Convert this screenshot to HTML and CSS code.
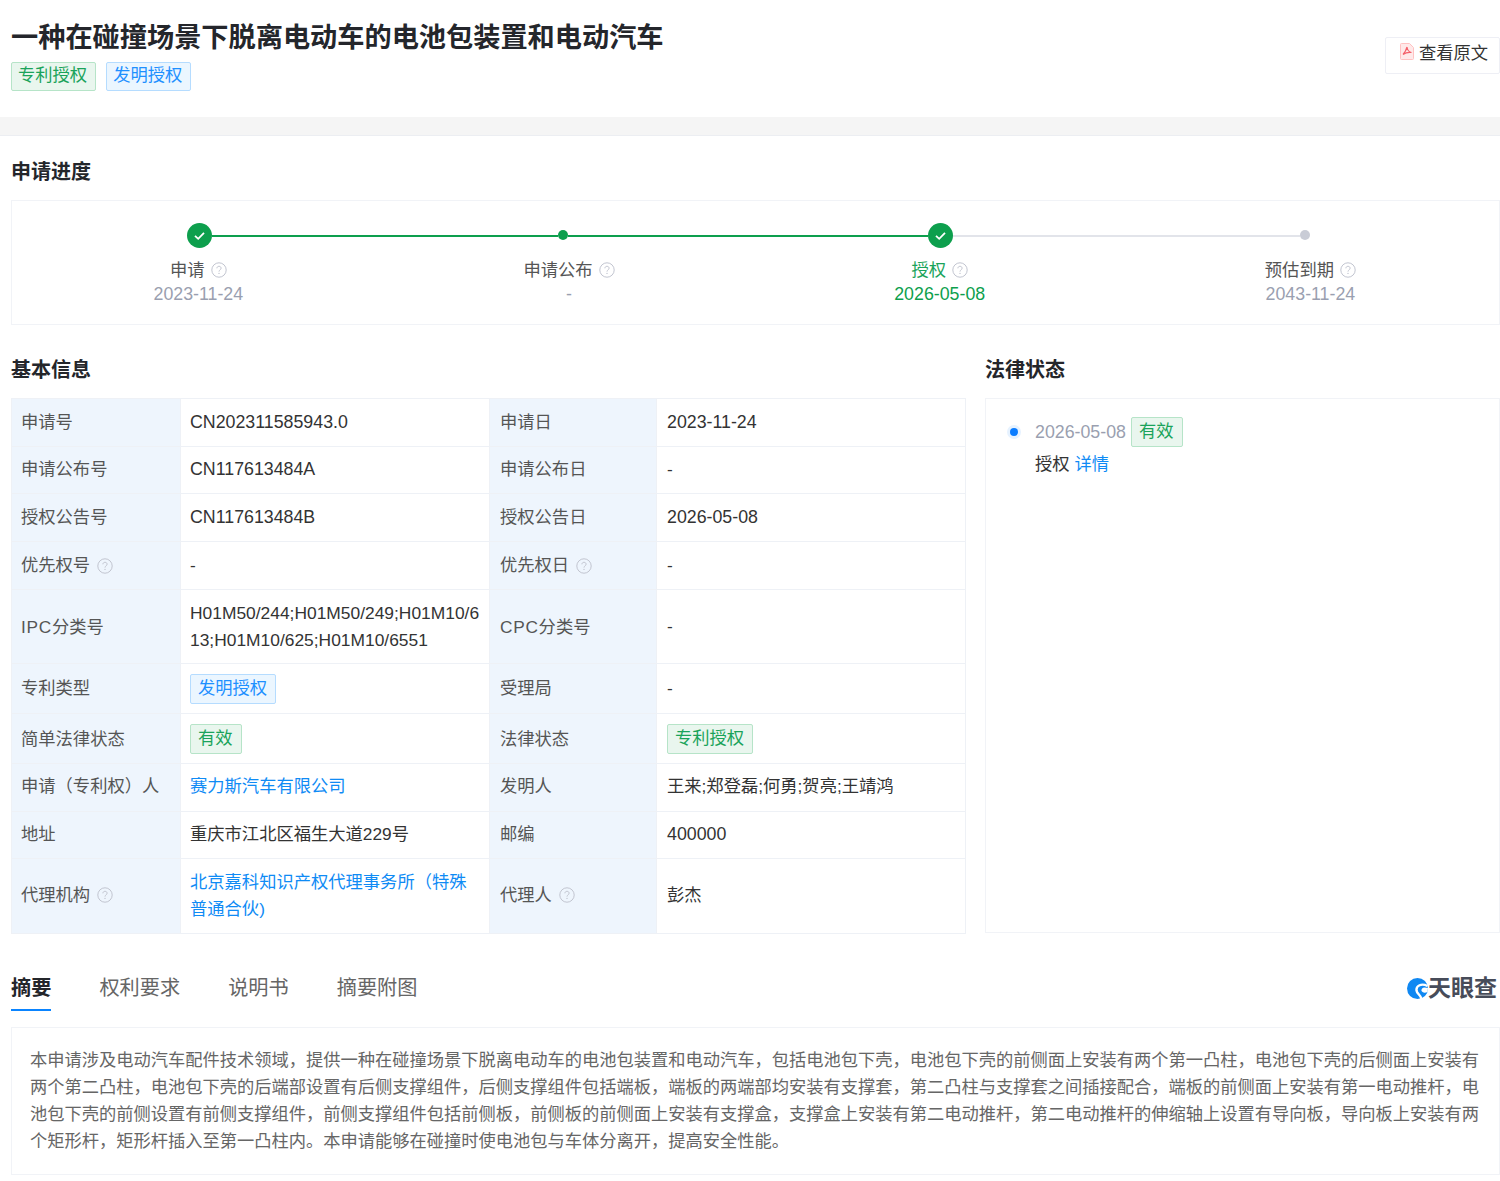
FILE: index.html
```html
<!DOCTYPE html>
<html lang="zh-CN">
<head>
<meta charset="utf-8">
<title>专利详情</title>
<link rel="stylesheet" href="styles.css">
</head>
<body>
<svg class="defs" width="0" height="0" aria-hidden="true">
  <symbol id="q" viewBox="0 0 16 16">
    <circle cx="8" cy="8" r="7.2" fill="none" stroke="#c2c5d0" stroke-width="1"/>
    <path d="M5.900 6.300c0-1.200.9-2 2.100-2s2.100.8 2.100 1.900c0 1.600-2.100 1.700-2.100 3.400" fill="none" stroke="#c2c5d0" stroke-width="1"/>
    <circle cx="8" cy="11.400" r=".7" fill="#c2c5d0"/>
  </symbol>
  <symbol id="check" viewBox="0 0 25 25">
    <circle cx="12.500" cy="12.500" r="12.500" fill="#0d9f4d"/>
    <path d="M8 12.800l3.200 3 5.800-6" fill="none" stroke="#fff" stroke-width="1.800"/>
  </symbol>
</svg>

<header class="top">
  <div>
    <h1 class="title">一种在碰撞场景下脱离电动车的电池包装置和电动汽车</h1>
    <div class="tags">
      <span class="tag green">专利授权</span>
      <span class="tag blue">发明授权</span>
    </div>
  </div>
  <button class="origin" type="button">
    <svg class="pdf" viewBox="0 0 14 17" width="14" height="17">
      <path d="M1.500.5h8l4 4v11a1 1 0 0 1-1 1h-11a1 1 0 0 1-1-1v-14a1 1 0 0 1 1-1z" fill="#ffe9e9" stroke="#ffc2c2"/>
      <path d="M7 4c-.6 2.500-1.800 5-4 7.500M7 4c.4 3 2 5 4.500 5.500M3 11.500c2.500-1.800 5-2.400 8.500-2" fill="none" stroke="#f4606a" stroke-width="1.200"/>
    </svg>
    查看原文
  </button>
</header>
<div class="band"></div>

<main class="page">
  <h2 class="heading h-progress">申请进度</h2>
  <section class="progress">
    <div class="track">
      <svg class="big" width="25" height="25"><use href="#check"/></svg>
      <span class="line green-line l1"></span>
      <span class="dot dot-green"></span>
      <span class="line green-line l2"></span>
      <svg class="big" width="25" height="25"><use href="#check"/></svg>
      <span class="line gray-line l3"></span>
      <span class="dot dot-gray"></span>
    </div>
    <div class="steps">
      <div class="step"><div class="step-name">申请<svg class="q"><use href="#q"/></svg></div><div class="step-date">2023-11-24</div></div>
      <div class="step"><div class="step-name">申请公布<svg class="q"><use href="#q"/></svg></div><div class="step-date">-</div></div>
      <div class="step on"><div class="step-name">授权<svg class="q"><use href="#q"/></svg></div><div class="step-date">2026-05-08</div></div>
      <div class="step"><div class="step-name">预估到期<svg class="q"><use href="#q"/></svg></div><div class="step-date">2043-11-24</div></div>
    </div>
  </section>

  <div class="columns">
    <section class="basic">
      <h2 class="heading">基本信息</h2>
      <div class="info">
        <div class="k">申请号</div><div class="v num">CN202311585943.0</div><div class="k">申请日</div><div class="v num">2023-11-24</div>
        <div class="k">申请公布号</div><div class="v num">CN117613484A</div><div class="k">申请公布日</div><div class="v">-</div>
        <div class="k">授权公告号</div><div class="v num">CN117613484B</div><div class="k">授权公告日</div><div class="v num">2026-05-08</div>
        <div class="k">优先权号<svg class="q"><use href="#q"/></svg></div><div class="v">-</div><div class="k">优先权日<svg class="q"><use href="#q"/></svg></div><div class="v">-</div>
        <div class="k"><span class="lat">IPC</span>分类号</div><div class="v wrap">H01M50/244;H01M50/249;H01M10/613;H01M10/625;H01M10/6551</div><div class="k"><span class="lat">CPC</span>分类号</div><div class="v">-</div>
        <div class="k">专利类型</div><div class="v"><span class="tag blue">发明授权</span></div><div class="k">受理局</div><div class="v">-</div>
        <div class="k">简单法律状态</div><div class="v"><span class="tag green">有效</span></div><div class="k">法律状态</div><div class="v"><span class="tag green">专利授权</span></div>
        <div class="k">申请（专利权）人</div><div class="v"><a class="link">赛力斯汽车有限公司</a></div><div class="k">发明人</div><div class="v">王来;郑登磊;何勇;贺亮;王靖鸿</div>
        <div class="k">地址</div><div class="v">重庆市江北区福生大道229号</div><div class="k">邮编</div><div class="v num">400000</div>
        <div class="k">代理机构<svg class="q"><use href="#q"/></svg></div><div class="v agency"><a class="link">北京嘉科知识产权代理事务所（特殊普通合伙)</a></div><div class="k">代理人<svg class="q"><use href="#q"/></svg></div><div class="v">彭杰</div>
      </div>
    </section>
    <section class="legal">
      <h2 class="heading">法律状态</h2>
      <div class="legal-box">
        <div class="legal-row">
          <span class="bullet"></span>
          <span class="legal-date">2026-05-08</span>
          <span class="tag green">有效</span>
        </div>
        <div class="legal-desc">授权 <a class="link">详情</a></div>
      </div>
    </section>
  </div>

  <div class="tabs">
    <a class="tab active">摘要</a>
    <a class="tab">权利要求</a>
    <a class="tab">说明书</a>
    <a class="tab">摘要附图</a>
    <div class="logo">
      <svg width="21" height="21" viewBox="0 0 21 21">
        <circle cx="10.500" cy="10.500" r="10.500" fill="#1088f2"/>
        <path d="M20.500 8C14.500 5 9 7.500 9.500 12.500 10 16 13.500 16.500 14.500 21" fill="none" stroke="#fff" stroke-width="2.400"/>
        <path d="M20.500 14c-3 1.500-5.500.5-6-1.500-.3-1.500 1-3 3-3l3.500.5z" fill="#fff"/>
      </svg>
      <span class="logo-text">天眼查</span>
    </div>
  </div>
  <section class="abstract">本申请涉及电动汽车配件技术领域，提供一种在碰撞场景下脱离电动车的电池包装置和电动汽车，包括电池包下壳，电池包下壳的前侧面上安装有两个第一凸柱，电池包下壳的后侧面上安装有两个第二凸柱，电池包下壳的后端部设置有后侧支撑组件，后侧支撑组件包括端板，端板的两端部均安装有支撑套，第二凸柱与支撑套之间插接配合，端板的前侧面上安装有第一电动推杆，电池包下壳的前侧设置有前侧支撑组件，前侧支撑组件包括前侧板，前侧板的前侧面上安装有支撑盒，支撑盒上安装有第二电动推杆，第二电动推杆的伸缩轴上设置有导向板，导向板上安装有两个矩形杆，矩形杆插入至第一凸柱内。本申请能够在碰撞时使电池包与车体分离开，提高安全性能。</section>
</main>
</body>
</html>
```
FILE: styles.css
```css
* { box-sizing: border-box; }
html, body { margin: 0; padding: 0; }
body {
  width: 1500px;
  background: #fff;
  color: #333;
  font-family: "Liberation Sans", "Noto Sans CJK SC", sans-serif;
  font-size: 17.3px;
}
.defs { position: absolute; }
h1, h2 { margin: 0; }

.top {
  display: flex;
  justify-content: space-between;
  height: 117px;
  padding: 22px 0 0 11px;
}
.title {
  font-size: 27.2px;
  line-height: 32px;
  font-weight: 700;
  color: #24262b;
}
.tags { display: flex; gap: 10px; margin-top: 8px; }
.tag {
  display: inline-block;
  height: 30px;
  padding: 0 8px 0 7px;
  border: 1px solid;
  border-radius: 2px;
  line-height: 26px;
  font-size: 17.3px;
}
.tags .tag { height: 29px; line-height: 25px; padding: 0 8px 0 6px; }
.green { background: #e9f6ee; border-color: #b6e4c8; color: #1aa35a; }
.blue { background: #ebf6ff; border-color: #b5dcff; color: #1e90ff; }
.origin {
  display: flex;
  align-items: center;
  gap: 5px;
  width: 115px;
  height: 37px;
  margin-top: 15px;
  padding: 0 0 8px 14px;
  background: #fff;
  border: 1px solid #eeeff5;
  border-radius: 2px;
  font: inherit;
  color: #333;
}
.band {
  height: 19px;
  background: #f5f5f5;
  border-bottom: 1px solid #eceef2;
}

.page { padding-left: 11px; }
.heading {
  font-size: 20px;
  line-height: 28px;
  font-weight: 700;
  color: #24262b;
}
.h-progress { padding-top: 22px; height: 64px; }

.progress {
  height: 125px;
  border: 1px solid #f1f3f7;
  padding-top: 22px;
}
.track {
  display: flex;
  align-items: center;
  height: 25px;
  padding-left: 175px;
}
.big { flex: none; }
.line { flex: none; height: 2px; }
.green-line { background: #0d9f4d; }
.gray-line { background: #e2e4ea; }
.l1 { width: 346px; }
.l2 { width: 360px; }
.l3 { width: 347px; }
.dot { flex: none; width: 10px; height: 10px; border-radius: 50%; margin-top: -2px; }
.dot-green { background: #0d9f4d; }
.dot-gray { background: #c9ccd6; }
.steps {
  display: grid;
  grid-template-columns: repeat(4, 370.7px);
  margin-top: 11px;
  padding-left: 1px;
}
.step { text-align: center; }
.step-name { line-height: 23px; color: #555; }
.step-date { line-height: 24px; font-size: 17.8px; color: #9a9fb0; }
.on .step-name { color: #1aa35a; }
.on .step-date { color: #0d9f4d; }
.q { width: 16px; height: 16px; margin-left: 7px; vertical-align: -2px; }
.step .q { margin-left: 6px; }

.columns {
  display: flex;
  gap: 19px;
  margin-top: 30px;
}
.basic { width: 955px; flex: none; }
.legal { flex: 1; }
.columns .heading { height: 43px; line-height: 30px; }
.info {
  display: grid;
  grid-template-columns: 169px 309px 167px 309px;
  grid-template-rows: 48px 47px 48px 48px 74px 50px 50px 48px 47px 75px;
  border: 1px solid #eef1f6;
  border-bottom-width: 0;
  border-right-width: 0;
}
.k, .v {
  display: flex;
  align-items: center;
  padding-left: 9px;
  border-bottom: 1px solid #eef1f6;
  border-right: 1px solid #eef1f6;
  line-height: 27px;
}
.k:nth-child(4n+3), .v:nth-child(4n+4) { padding-left: 10px; }
.info > :nth-child(n+5):nth-child(-n+8),
.info > :nth-child(n+29) { padding-bottom: 2px; }
.info > .agency { padding-bottom: 0; }
.k:nth-child(n+25):nth-child(-n+28) { padding-top: 2px; }
.k:nth-child(n+17):nth-child(-n+20) { padding-top: 1px; }
.k { background: #eef5fd; color: #555; }
.v { color: #333; }
.num { font-size: 17.8px; }
.lat { letter-spacing: .7px; }
.wrap { font-size: 17.4px; word-break: break-all; padding-right: 4px; }
.agency { padding-right: 16px; }
.link { color: #0f8bf5; }

.legal-box {
  height: 535px;
  border: 1px solid #f1f3f7;
  padding: 18px 0 0 24px;
}
.legal-row { display: flex; align-items: center; }
.bullet {
  flex: none;
  width: 8px;
  height: 8px;
  border-radius: 50%;
  background: #0a7cff;
  box-shadow: 0 0 0 3px #e6f2ff;
  margin-right: 17px;
}
.legal-date { color: #9a9fb0; margin-right: 5px; font-size: 17.8px; }
.legal-desc { margin: 3px 0 0 25px; line-height: 28px; color: #333; }

.tabs {
  display: flex;
  gap: 48px;
  align-items: flex-start;
  height: 93px;
  padding-top: 40px;
}
.tab {
  font-size: 20.2px;
  line-height: 28px;
  height: 37px;
  color: #666;
}
.tab.active {
  color: #24262b;
  font-weight: 700;
  border-bottom: 2px solid #0a84ff;
}
.logo {
  margin-left: auto;
  display: flex;
  align-items: center;
  gap: 0;
  height: 28px;
  padding-right: 3px;
}
.logo-text { font-size: 23px; line-height: 24px; font-weight: 700; color: #474c59; }

.abstract {
  height: 148px;
  border: 1px solid #f1f3f7;
  padding: 19px 15px 0 18px;
  font-size: 17.25px;
  line-height: 27px;
  color: #666;
}
```
